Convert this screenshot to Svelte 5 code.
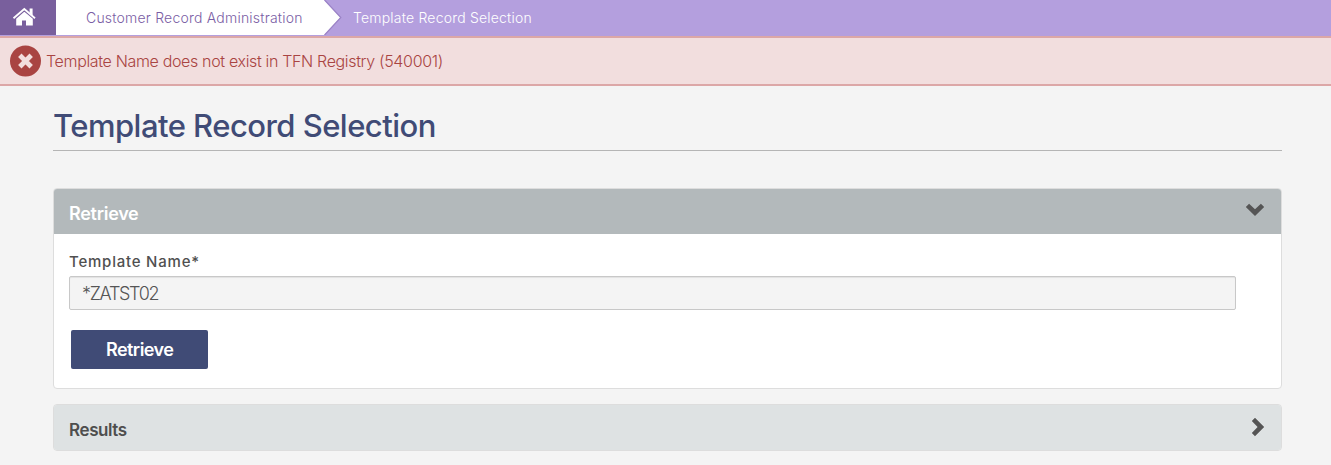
<script>
  let retrieveOpen = $state(true);
  let resultsOpen = $state(false);
  let name = $state('*ZATST02');
</script>

<nav class="crumbs">
  <a class="home" href="#home" aria-label="Home">
    <svg width="24" height="20" viewBox="0 0 24 20">
      <path fill="#fff" d="M12 4.9 4.2 11.7V18.5H10v-5h4v5h6.8v-6.8L12.7 4.9Z" />
      <path fill="none" stroke="#fff" stroke-width="1.8" d="M1.5 11.2 12.3 2 23 11.2" />
      <path fill="#fff" d="M17.6 1.5h3v7.2l-3-2.6Z" />
    </svg>
  </a>
  <a class="parent" href="#admin"><span class="t-parent">Customer Record Administration</span></a>
  <svg class="arrow" width="18" height="35" viewBox="0 0 18 35">
    <path fill="#fff" d="M0 0 16.5 17.5 0 35Z" />
    <path fill="none" stroke="#9b83c6" stroke-width="1.2" d="M.6 0 16.8 17.5.6 35" />
  </svg>
  <span class="current"><span class="t-current">Template Record Selection</span></span>
</nav>

<div class="alert">
  <svg width="31" height="32" viewBox="0 0 31 32">
    <circle cx="15.5" cy="16" r="15.5" fill="#a94442" />
    <path d="m9.8 10.3 11.4 11.4M21.2 10.3 9.8 21.7" stroke="#f2dede" stroke-width="4.8" />
  </svg>
  <span class="t-alert">Template Name does not exist in TFN Registry (540001)</span>
</div>

<main>
  <h1><span class="t-title">Template Record Selection</span></h1>
  <section class="panel">
    <button class="head open" onclick={() => (retrieveOpen = !retrieveOpen)}>
      <span class="t-head">Retrieve</span>
      <svg class="down" width="20" height="14" viewBox="0 0 20 14">
        <path fill="#555" d="m.8 4 3.3-3.2L10 6.2 15.9.8 19.2 4 10 13Z" />
      </svg>
    </button>
    {#if retrieveOpen}
      <div class="body">
        <label for="tpl"><span class="t-label">Template Name*</span></label>
        <input id="tpl" bind:value={name} />
        <button class="submit"><span class="t-submit">Retrieve</span></button>
      </div>
    {/if}
  </section>
  <section class="panel second">
    <button class="head closed" onclick={() => (resultsOpen = !resultsOpen)}>
      <span class="t-results">Results</span>
      <svg class="right" width="14" height="20" viewBox="0 0 14 20">
        <path fill="#555" d="M4 .8.8 4.1 6.6 10 .8 15.9 4 19.2l9.2-9.2Z" />
      </svg>
    </button>
  </section>
</main>

<style>
  :global(body) {
    margin: 0;
    background: #f4f4f4;
    font-family: Inter, 'Open Sans', sans-serif;
    overflow: hidden;
  }
  a { text-decoration: none; }
  svg { display: block; flex: none; }
  .crumbs {
    display: flex;
    height: 36px;
    background: #b49fde;
    font-size: 14px;
    line-height: 36px;
    font-weight: 300;
    white-space: nowrap;
  }
  .home {
    width: 56px;
    height: 35px;
    box-sizing: border-box;
    padding: 7px 0 0 12px;
    background: #795f9d;
  }
  .parent {
    width: 268px;
    height: 35px;
    box-sizing: border-box;
    padding-left: 30px;
    background: #fff;
    color: #7a5da4;
  }
  .current { padding-left: 11px; color: #fff; }
  .t-parent { letter-spacing: 0.21px; }
  .t-current { letter-spacing: 0.2px; }
  .t-alert { letter-spacing: -0.34px; }
  .t-title { letter-spacing: -0.53px; }
  .t-head { letter-spacing: -0.28px; }
  .t-label { letter-spacing: 0.78px; }
  .t-submit { letter-spacing: -0.55px; }
  .t-results { font-size: 17px; letter-spacing: -0.4px; }
  .alert {
    display: flex;
    align-items: center;
    height: 50px;
    box-sizing: border-box;
    padding: 0 10px;
    gap: 5px;
    background: #f2dede;
    border: solid #dca7a7;
    border-width: 2px 0;
    color: #a94442;
    font-size: 16px;
    font-weight: 300;
    white-space: nowrap;
  }
  main { padding: 0 49px 0 53px; }
  h1 {
    height: 65px;
    box-sizing: border-box;
    margin: 0 0 37px;
    padding-top: 20px;
    border-bottom: 1px solid #b5b5b5;
    color: #404b76;
    font-size: 31px;
    line-height: 40px;
    font-weight: 500;
  }
  .panel {
    border: 1px solid #ddd;
    border-radius: 4px;
    background: #fff;
    overflow: hidden;
  }
  .second { margin-top: 15px; }
  button { border: 0; font-family: inherit; text-align: left; cursor: pointer; }
  .head {
    display: flex;
    justify-content: space-between;
    width: 100%;
    height: 45px;
    padding: 13px 16px 0 15px;
    font-size: 18px;
    line-height: 24px;
    font-weight: 600;
  }
  .open { background: #b3b9bb; color: #fff; }
  .closed { background: #dee2e3; color: #4e4e4e; }
  .down { margin-top: 1px; }
  .right { margin-top: -1px; }
  .body {
    height: 154px;
    box-sizing: border-box;
    padding: 18px 45px 0 15px;
  }
  label {
    display: block;
    height: 24px;
    color: #505050;
    font-size: 15px;
    line-height: 20px;
    font-weight: 500;
  }
  input {
    display: block;
    width: 100%;
    height: 34px;
    box-sizing: border-box;
    padding: 0 12px;
    border: 1px solid #c8c8c8;
    border-radius: 2px;
    background: #f4f4f4;
    box-shadow: inset 0 1px 1px rgba(0, 0, 0, 0.075);
    color: #555;
    font-family: inherit;
    font-size: 18px;
    font-weight: 300;
    letter-spacing: -1.3px;
    outline: none;
  }
  .submit {
    display: block;
    width: 137px;
    height: 39px;
    margin: 20px 0 0 2px;
    padding: 0 0 0 35px;
    border-radius: 2px;
    background: #404b76;
    color: #fff;
    font-size: 18px;
    font-weight: 600;
  }
</style>
